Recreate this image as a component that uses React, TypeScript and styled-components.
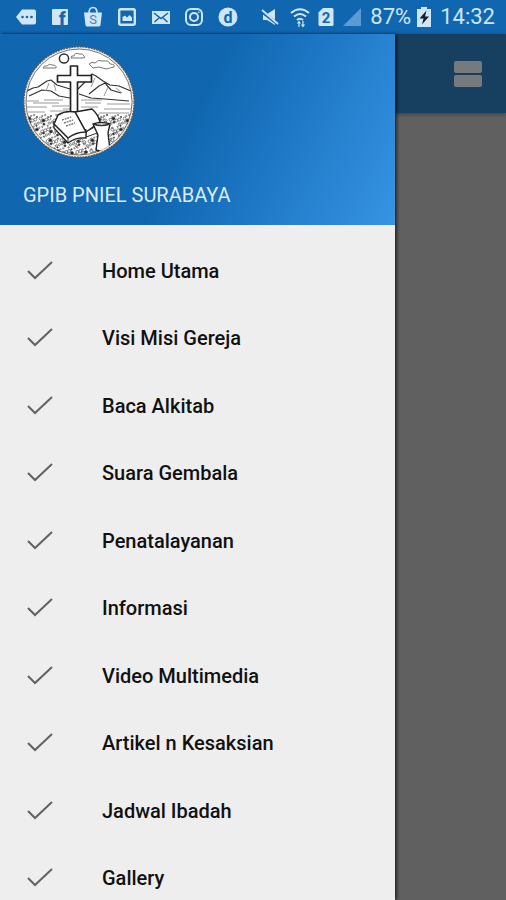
import React from "react";
import styled, { createGlobalStyle } from "styled-components";

const Global = createGlobalStyle`
  * { box-sizing: border-box; }
  body { margin: 0; background: #606060; font-family: Roboto, "Liberation Sans", sans-serif; }
`;

const ice = "#cfe5f8";
const blue = "#1067b0";

const Screen = styled.div`
  display: flex;
  flex-direction: column;
  height: 100vh;
  overflow: hidden;
`;

const StatusBar = styled.div`
  display: flex;
  justify-content: space-between;
  align-items: center;
  height: 34px;
  flex: none;
  padding: 0 11px 0 16px;
  background: ${blue};
  color: ${ice};
`;

const Notifications = styled.div`
  display: flex;
  justify-content: space-between;
  align-items: center;
  flex: 0 1 222px;
`;

const Indicators = styled.div`
  display: flex;
  align-items: center;
  gap: 8px;
`;

const StatusIcon = styled.svg<{ $w?: number }>`
  display: block;
  width: ${(p) => p.$w ?? 20}px;
  height: 20px;
  overflow: visible;
`;

const StatusText = styled.span`
  font-size: 22px;
  line-height: 36px;
`;

const Power = styled.div`
  display: flex;
  align-items: center;
  gap: 5px;
`;

const Body = styled.div`
  position: relative;
  flex: 1;
  min-height: 0;
`;

const AppBar = styled.header`
  display: flex;
  align-items: center;
  justify-content: flex-end;
  height: 79px;
  padding: 0 24px;
  background: #173f60;
  box-shadow: 0 1px 4px rgba(0, 0, 0, 0.4);
`;

const ViewToggle = styled.button`
  display: flex;
  flex-direction: column;
  gap: 2px;
  width: 28px;
  padding: 0;
  border: 0;
  background: none;
`;

const ToggleBlock = styled.span`
  height: 12px;
  border-radius: 2px;
  background: #777a7c;
`;

const Drawer = styled.aside`
  position: absolute;
  top: 0;
  bottom: 0;
  left: 0;
  width: 78%;
  display: flex;
  flex-direction: column;
  background: #eeeeee;
  box-shadow: 2px 0 3px rgba(0, 0, 0, 0.6);
`;

const DrawerHeader = styled.div`
  display: flex;
  flex-direction: column;
  align-items: flex-start;
  gap: 25px;
  flex: none;
  padding: 12px 23px 18px;
  background: linear-gradient(115deg, ${blue} 0%, ${blue} 48%, #1e77c5 68%, #3694e3 100%);
`;

const Emblem = styled.svg`
  display: block;
  width: 112px;
  height: 112px;
`;

const Title = styled.h1`
  margin: 0;
  font-size: 20px;
  line-height: 24px;
  font-weight: 400;
  color: #dcebf8;
`;

const Menu = styled.nav`
  flex: 1;
  min-height: 0;
  display: grid;
  grid-auto-rows: 1fr;
  padding-top: 12px;
  margin-bottom: -12px;
`;

const MenuLink = styled.a`
  display: flex;
  align-items: center;
  gap: 48px;
  padding: 0 26px;
  color: #111111;
  font-size: 20px;
  line-height: 24px;
  font-weight: 500;
  text-decoration: none;
`;

const Tick = styled.svg`
  width: 28px;
  height: 24px;
  fill: none;
  stroke: #626262;
  stroke-width: 2;
`;

const items = [
  "Home Utama",
  "Visi Misi Gereja",
  "Baca Alkitab",
  "Suara Gembala",
  "Penatalayanan",
  "Informasi",
  "Video Multimedia",
  "Artikel n Kesaksian",
  "Jadwal Ibadah",
  "Gallery",
];

const pebbles = Array.from({ length: 12 }, (_, row) =>
  Array.from({ length: 32 }, (_, col) => ({
    x: col * 3.5 + (row % 2) * 1.8 + ((col * 7 + row * 3) % 4) * 0.6,
    y: 70 + row * 3.6 + ((col * 5 + row) % 3) - 1,
    r: 0.7 + ((col * 3 + row * 5) % 3) * 0.4,
    solid: (col * 5 + row * 7) % 4 === 0,
  }))
).flat();

function ChurchEmblem() {
  return (
    <Emblem viewBox="0 0 112 112" role="img" aria-label="GPIB Pniel">
      <defs>
        <clipPath id="disc"><circle cx="56" cy="56" r="53" /></clipPath>
      </defs>
      <circle cx="56" cy="56" r="55.2" fill="#efeadf" stroke="#4f5860" strokeWidth="1.4" strokeDasharray="2 0.8" />
      <circle cx="56" cy="56" r="53" fill="#fff" stroke="#77777a" strokeWidth="1" />
      <g clipPath="url(#disc)" fill="none" stroke="#333" strokeWidth="1" strokeLinejoin="round">
        <circle cx="41" cy="12.5" r="4.6" strokeWidth="1.5" />
        <path d="M48 12q0-3 3-2q1-4 5-2q4-1 5 2q2 2-1 2zM20 22q1-3 4-2q2-3 5-1q5 0 4 3zM66 18q3-3 6-1q3-4 8-2q6-1 7 3q5 0 4 3l-8 2l-7-2l-6 1z" stroke="#777" />
        <path d="M2 46l8-4l5-1l9-6l4-1l6 5l13 4M6 50l13-6l9 1l8 5l11 2" strokeWidth="1.2" />
        <path d="M55 43l8-8l6-7l4 2l7 5l7 4l9 1l12 5M66 48l10-8l6-3l6 7l10 3M56 48l12 4l14 1l24 2" strokeWidth="1.2" />
        <path d="M26 37l-3 8M31 38l2 7M72 32l-4 9M85 41l-4 9M93 42l6 5" stroke="#999" />
        <path d="M3 55h13M21 54h19M58 54h21M84 58h23M2 61h22M29 60h17M58 61h17M81 63h27M5 66h17M27 65h18M58 65h10M76 67h30M10 57h26M62 57h16M40 63h7" stroke="#999" />
        <g stroke="#555" strokeWidth="0.7">
          {pebbles.map((p, i) => (
            <circle key={i} cx={p.x} cy={p.y} r={p.r} fill={p.solid ? "#222" : "none"} />
          ))}
        </g>
        <path d="M47.5 20h7v9.5h14v6.5h-14v30h-7v-30h-13v-6.5h13z" fill="#fff" stroke="#222" strokeWidth="1.7" />
        <path d="M52 66l17-3q6 5 8 13l-14 10z" fill="#fff" stroke="#222" strokeWidth="1.4" />
        <path d="M63 86l14-8v8l-14 5z" fill="#fff" stroke="#333" />
        <path d="M31 76v6l14 15q8-6 18-5v-8z" fill="#fff" stroke="#222" strokeWidth="1.3" />
        <path d="M35 69q8-5 17-3l11 20q-10 0-18 6l-14-14z" fill="#fff" stroke="#222" strokeWidth="1.5" />
        <path d="M45 91v5" stroke="#333" />
        <path d="M39 74l9-3M41 77l9-3M43 80l9-3" stroke="#777" strokeWidth="1.4" strokeDasharray="2 0.8" />
        <path d="M70 78q8-3 17 0l-2 9l2 17q-7 3-14 0l2-15z" fill="#fff" stroke="#222" strokeWidth="1.4" />
        <path d="M70 78q8 3 17 0" stroke="#333" strokeWidth="1.4" />
      </g>
    </Emblem>
  );
}

function NotificationIcons() {
  return (
    <Notifications>
      <StatusIcon viewBox="0 0 20 20" fill={ice}>
        <path d="M6 2.500h12q2 0 2 2v11q0 2-2 2H6L0 10z" />
        <g fill={blue}><circle cx="6.5" cy="10" r="1.3" /><circle cx="11" cy="10" r="1.3" /><circle cx="15.5" cy="10" r="1.3" /></g>
      </StatusIcon>
      <StatusIcon viewBox="0 0 20 20">
        <rect x="2" y="2" width="16" height="16" rx="1" fill={ice} />
        <text x="9" y="18" fontSize="18" fontWeight="900" fill={blue}>f</text>
      </StatusIcon>
      <StatusIcon viewBox="0 0 20 20">
        <path d="M1 5.500h18l-1.500 12.500q-.2 1.500-1.700 1.500H4.200q-1.500 0-1.700-1.500z" fill={ice} />
        <path d="M6 6q0-5.500 4-5.500t4 5.500" fill="none" stroke={ice} strokeWidth="1.6" />
        <text x="10" y="17" fontSize="13" textAnchor="middle" fill="#4d83b0">S</text>
      </StatusIcon>
      <StatusIcon viewBox="0 0 20 20">
        <rect x="2.2" y="2.2" width="15.6" height="15.6" rx="1.5" fill="none" stroke={ice} strokeWidth="2.4" />
        <path d="M5.500 14V10l2.500-1.500 2 2 2.500-2.500L15 10.500V14z" fill={ice} />
      </StatusIcon>
      <StatusIcon viewBox="0 0 20 20">
        <rect x="1" y="4" width="18" height="13" fill={ice} />
        <path d="M3 6l7 5.500L17 6M3.500 15l4.500-4M16.500 15l-4.500-4" fill="none" stroke={blue} strokeWidth="1.5" />
      </StatusIcon>
      <StatusIcon viewBox="0 0 20 20" fill="none" stroke={ice}>
        <rect x="2" y="2" width="16" height="16" rx="5" strokeWidth="2" />
        <circle cx="10" cy="10" r="4" strokeWidth="2" />
        <circle cx="14.8" cy="5.2" r="0.5" />
      </StatusIcon>
      <StatusIcon viewBox="0 0 20 20">
        <circle cx="10" cy="10" r="9.5" fill={ice} />
        <text x="10" y="15.5" fontSize="16" fontWeight="700" textAnchor="middle" fill={blue}>d</text>
      </StatusIcon>
    </Notifications>
  );
}

function SystemIndicators() {
  return (
    <Indicators>
      <StatusIcon $w={22} viewBox="0 0 22 20">
        <path d="M3 7h4l8-5v16l-8-5H3z" fill={ice} />
        <path d="M1 4l18 14" stroke={blue} strokeWidth="3" />
        <path d="M2 3l16 14" stroke={ice} strokeWidth="1.8" />
      </StatusIcon>
      <StatusIcon viewBox="0 0 20 20" fill="none" stroke={ice} strokeWidth="2">
        <path d="M1 6q9-7.500 18 0M4 9.500q6-5 12 0M7 13q3-2.500 6 0" />
        <path d="M9 20v-5M7.500 16.500l1.500-2 1.500 2M13 14v5M11.500 17.500l1.500 2 1.500-2" strokeWidth="1.2" />
      </StatusIcon>
      <StatusIcon $w={16} viewBox="0 0 16 20">
        <path d="M5 1h9q1.500 0 1.500 1.500v15q0 1.500-1.500 1.500H2q-1.500 0-1.500-1.500V5.500z" fill={ice} />
        <text x="8" y="15.5" fontSize="15" fontWeight="700" textAnchor="middle" fill={blue}>2</text>
      </StatusIcon>
      <StatusIcon viewBox="0 0 20 20">
        <path d="M19 1v18H1z" fill="#5b9bd3" />
      </StatusIcon>
      <Power>
        <StatusText>87%</StatusText>
        <StatusIcon $w={16} viewBox="0 0 16 20">
          <path d="M5 0h6v2h4v18H1V2h4z" fill={ice} />
          <path d="M10.500 3.500l-7 8h4l-1.500 6 7-8H9z" fill="#14212c" />
        </StatusIcon>
      </Power>
      <StatusText>14:32</StatusText>
    </Indicators>
  );
}

export default function App() {
  return (
    <Screen>
      <Global />
      <StatusBar>
        <NotificationIcons />
        <SystemIndicators />
      </StatusBar>
      <Body>
        <AppBar>
          <ViewToggle aria-label="Change view">
            <ToggleBlock />
            <ToggleBlock />
          </ViewToggle>
        </AppBar>
        <Drawer>
          <DrawerHeader>
            <ChurchEmblem />
            <Title>GPIB PNIEL SURABAYA</Title>
          </DrawerHeader>
          <Menu>
            {items.map((label) => (
              <MenuLink key={label} href="#">
                <Tick viewBox="0 0 28 24" aria-hidden="true">
                  <path d="M2 12l7 7L26 3" />
                </Tick>
                {label}
              </MenuLink>
            ))}
          </Menu>
        </Drawer>
      </Body>
    </Screen>
  );
}
